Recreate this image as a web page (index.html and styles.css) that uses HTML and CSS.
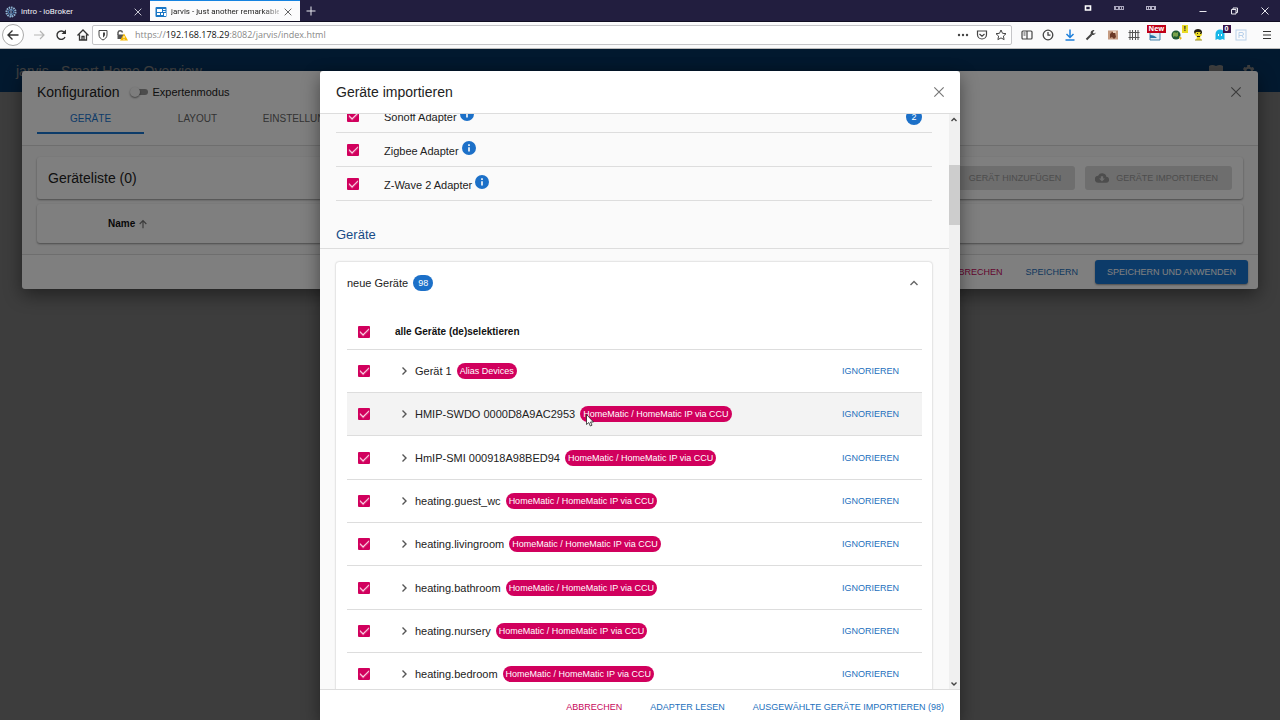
FILE: index.html
```html
<!DOCTYPE html>
<html lang="de">
<head>
<meta charset="utf-8">
<meta name="viewport" content="width=device-width, initial-scale=1">
<title>jarvis - just another remarkable vis</title>
<link rel="stylesheet" href="styles.css">
</head>
<body>
<svg class="defs" aria-hidden="true">
  <symbol id="close" viewBox="0 0 12 12"><path d="M2 2l8 8M10 2l-8 8" fill="none" stroke="currentColor"/></symbol>
  <symbol id="chevron" viewBox="0 0 12 12"><path d="M4.500 2.500L8 6l-3.500 3.500" fill="none" stroke="currentColor" stroke-width="1.4"/></symbol>
  <symbol id="info" viewBox="0 0 24 24"><path fill="currentColor" d="M12 0a12 12 0 1 0 0 24a12 12 0 0 0 0-24zm1.4 18h-2.8v-7.500h2.800zm0-9.500h-2.800V5.700h2.800z"/></symbol>
</svg>

<header class="browser">
  <div class="tabstrip">
    <div class="tab">
      <svg class="fav" viewBox="0 0 12 12" fill="none" stroke="#8fb4d2"><circle cx="6" cy="6" r="4.500" stroke-width="2" stroke-dasharray="1.500 .8"/><circle cx="6" cy="6" r="2.500" stroke="#4b86b8"/><path d="M6 3v8"/></svg>
      <span class="tab-title">intro - ioBroker</span>
      <button class="plain" aria-label="Tab schließen"><svg class="i10" ><use href="#close"/></svg></button>
    </div>
    <div class="tab active">
      <svg class="fav" viewBox="0 0 12 12"><rect x=".5" y="1" width="11" height="10" rx="1" fill="#1976c5"/><path d="M2 3h5v3H2zM8 3h2.500v1H8zM8 5h2.500v1H8zM2 7h3v2H2zM6 7h2v2H6zM9 7h2v3H9z" fill="#fff"/></svg>
      <span class="tab-title fade">jarvis - just another remarkable</span>
      <button class="plain" aria-label="Tab schließen"><svg class="i10"><use href="#close"/></svg></button>
    </div>
    <button class="plain new-tab" aria-label="Neuer Tab"><svg class="i10" viewBox="0 0 10 10"><path d="M5 .5v9M.5 5h9" stroke="currentColor"/></svg></button>
    <div class="window-icons">
      <svg class="i8" viewBox="0 0 8 8"><path d="M1.500 2h5v4h-5z" fill="none" stroke="#fff" stroke-width="1.600"/></svg>
      <svg class="i10" viewBox="0 0 10 8"><path d="M0 2h10v4H0z" fill="#a9a6bd"/><path d="M2 3h2v2H2zM6 3h1v2H6zM8 3h1v2H8z" fill="#282340"/></svg>
      <svg class="i10" viewBox="0 0 10 8"><path d="M0 2h10v4H0z" fill="#b5b2c8"/><path d="M1 3h1v2H1zM3 3h1v2H3zM6 3h2v2H6z" fill="#282340"/></svg>
    </div>
    <div class="window-controls">
      <button class="plain" aria-label="Minimieren"><svg class="i10" viewBox="0 0 10 10"><path d="M1.500 5.500h7" stroke="currentColor"/></svg></button>
      <button class="plain" aria-label="Wiederherstellen"><svg class="i10" viewBox="0 0 10 10" fill="none" stroke="currentColor"><path d="M2.500 3.500h4.500v4.500H2.500zM4 3.500v-1.500h4.500v4.500H7"/></svg></button>
      <button class="plain" aria-label="Schließen"><svg class="i10" viewBox="0 0 10 10"><path d="M1.500 1.500l7 7M8.500 1.500l-7 7" stroke="currentColor"/></svg></button>
    </div>
  </div>
  <div class="toolbar">
    <nav class="nav">
      <button class="plain back" aria-label="Zurück"><svg class="i14" viewBox="0 0 14 14" fill="none" stroke="#333" stroke-width="1.400"><path d="M12.500 7H2.500M6.500 2.500L2 7l4.500 4.500"/></svg></button>
      <button class="plain" aria-label="Vor"><svg class="i14" viewBox="0 0 14 14" fill="none" stroke="#b5b5b5" stroke-width="1.200"><path d="M2 7h10M8 3l4 4-4 4"/></svg></button>
      <button class="plain" aria-label="Neu laden"><svg class="i14" viewBox="0 0 14 14" fill="none" stroke="#333" stroke-width="1.400"><path d="M11 9A4.200 4.200 0 1 1 10.500 4.500"/><path d="M12 1.500V6H7.500z" fill="#333" stroke="none"/></svg></button>
      <button class="plain" aria-label="Startseite"><svg class="i14" viewBox="0 0 14 14" fill="none" stroke="#333" stroke-width="1.300"><path d="M1.500 7.500L7 2l5.500 5.500M3.500 6.500V12h7V6.500M6 12V8.500h2V12"/></svg></button>
    </nav>
    <div class="urlbar">
      <svg class="i12" viewBox="0 0 12 12" fill="none" stroke="#444"><path d="M2 1.500h8v4.500c0 2.500-2 4-4 5-2-1-4-2.500-4-5z"/><path d="M6 3.500v5c1-.6 2-1.500 2-3v-2z" fill="#444" stroke="none"/></svg>
      <svg class="i12" viewBox="0 0 12 12"><path d="M2 6V3.500a2.300 2.300 0 0 1 4.500 0" fill="none" stroke="#555" stroke-width="1.400"/><path d="M1.500 5.500h6V10h-6z" fill="#555"/><path d="M8 4.500l4 7H4z" fill="#f5b800"/><path d="M8 7v2.200M8 10v.8" stroke="#fff"/></svg>
      <p class="url">https://<b>192.168.178.29</b>:8082/jarvis/index.html</p>
      <svg class="i12" viewBox="0 0 12 12" fill="#444"><circle cx="2" cy="6" r="1.200"/><circle cx="6" cy="6" r="1.200"/><circle cx="10" cy="6" r="1.200"/></svg>
      <svg class="i12" viewBox="0 0 12 12" fill="none" stroke="#444" stroke-width="1.200"><path d="M1.500 2h9v3.500a4.500 4.500 0 0 1-9 0zM3.500 5L6 7.300 8.500 5"/></svg>
      <svg class="i12" viewBox="0 0 12 12" fill="none" stroke="#444"><path d="M6 1l1.500 3.300 3.500.4-2.600 2.400.7 3.500L6 8.900l-3.100 1.700.7-3.500L1 4.700l3.500-.4z"/></svg>
    </div>
    <div class="extensions">
      <svg class="i14" viewBox="0 0 14 14" fill="none" stroke="#444" stroke-width="1.200"><rect x="2" y="3" width="10" height="8" rx="1"/><path d="M7 3v8M3.500 5h2M3.500 7h2"/></svg>
      <svg class="i14" viewBox="0 0 14 14" fill="none" stroke="#444" stroke-width="1.300"><circle cx="7" cy="7" r="4.800"/><path d="M7 4v3.200h2.500"/></svg>
      <svg class="i14" viewBox="0 0 14 14" fill="none" stroke="#1e7fdb" stroke-width="1.500"><path d="M7 1.500v8M3.500 6L7 9.500 10.500 6M2.500 12h9"/></svg>
      <svg class="i14" viewBox="0 0 14 14"><path d="M2.500 11.500l5-5" stroke="#444" stroke-width="2"/><path d="M9.500 2a3 3 0 0 0-2.500 4.500 3 3 0 0 0 4.700-2L10 5.700 8.800 4.500 10.500 2z" fill="#444"/></svg>
      <svg class="i14" viewBox="0 0 14 14"><path d="M2 2.500h10v9H2z" fill="#c59b82"/><path d="M4 6l2-2 3 1 1 4-2 2-2-2-2 1z" fill="#6c3927"/><path d="M7 3h3v2H7z" fill="#ead1bd"/></svg>
      <svg class="i14" viewBox="0 0 14 14" fill="none" stroke="#555"><path d="M3 2v10M5.500 2v10M8.500 2v10M11 2v10M1.500 4.500h11M1.500 9.500h11"/></svg>
      <span class="ext"><svg class="i14" viewBox="0 0 14 14"><path d="M2 3h10v9H2z" fill="#dcebf3" stroke="#4783ad"/><path d="M2 7c3 0 5 1 7 3H2z" fill="#2672a3"/></svg><span class="ext-badge new">New</span></span>
      <span class="ext"><svg class="i14" viewBox="0 0 14 14"><circle cx="6" cy="7" r="4.500" fill="#205a32"/><path d="M3 5c2-2 3 1 5-1v4c-2 2-3-1-5 1z" fill="#79a24b"/><path d="M9 8l3 2-2 2z" fill="#e9b512"/></svg><span class="ext-badge warn">!</span></span>
      <svg class="i14" viewBox="0 0 14 14"><path d="M3 4l3-2 4 1 1 4-2 2 1 3H5l1-3-2-2z" fill="#e8d722"/><path d="M3 4c0-4 8-4 8 0v2L9 4H5L4 6zM6 5h1v1H6zM9 5h1v1H9zM6 8h3v1H6z" fill="#262219"/><path d="M4 12h7" stroke="#9a8d20"/></svg>
      <span class="ext"><svg class="i14" viewBox="0 0 14 14"><path d="M2.500 12V6a4.500 4.500 0 0 1 9 0v6l-2-1-2.500 1-2.500-1z" fill="#18b7e8"/><path d="M5 6h1v2H5zM8 6h1v2H8z" fill="#fff"/></svg><span class="ext-badge zero">0</span></span>
      <svg class="i14" viewBox="0 0 14 14" fill="none" stroke="#b8d0ea"><rect x="2" y="2" width="10" height="10"/><path d="M5 10V4.500h3a1.500 1.500 0 0 1 0 3H5M8 7.500L9.500 10"/></svg>
    </div>
    <button class="plain menu" aria-label="Menü"><svg class="i12" viewBox="0 0 12 12" stroke="#333" stroke-width="1.200"><path d="M2 2.500h8M2 6h8M2 9.500h8"/></svg></button>
  </div>
</header>

<div class="page">
  <header class="appbar">
    <p class="app-title">jarvis - Smart Home Overview</p>
    <svg class="i16" viewBox="0 0 16 16" fill="#fff"><path d="M1 3q3-2 7 0 4-2 7 0v8H9l-1 2-1-2H1z"/></svg>
    <svg class="i16" viewBox="0 0 24 24" fill="#fff"><path d="M19.400 13a7.500 7.500 0 0 0 0-2l2.100-1.600-2-3.500-2.500 1a7 7 0 0 0-1.700-1L15 3h-4l-.4 2.900a7 7 0 0 0-1.700 1l-2.500-1-2 3.500L6.500 11a7.500 7.500 0 0 0 0 2l-2.100 1.600 2 3.500 2.500-1a7 7 0 0 0 1.700 1L11 21h4l.3-2.900a7 7 0 0 0 1.700-1l2.500 1 2-3.500zM13 15.500a3.500 3.500 0 1 1 0-7 3.500 3.500 0 0 1 0 7z"/></svg>
  </header>

  <div class="overlay">
    <section class="dialog config" role="dialog" aria-labelledby="config-title">
      <header class="config-head">
        <div class="config-title">
          <h1 id="config-title">Konfiguration</h1>
          <label class="switch"><input type="checkbox" role="switch">Expertenmodus</label>
          <button class="plain push" aria-label="Schließen"><svg class="i14"><use href="#close"/></svg></button>
        </div>
        <nav class="tabs">
          <button class="selected">Geräte</button>
          <button>Layout</button>
          <button>Einstellungen</button>
        </nav>
      </header>
      <div class="config-body">
        <div class="card list-head">
          <h2>Geräteliste (0)</h2>
          <button class="btn disabled push" disabled><svg class="i14" viewBox="0 0 14 14"><path d="M7 2v10M2 7h10" stroke="currentColor" stroke-width="2"/></svg>Gerät hinzufügen</button>
          <button class="btn disabled" disabled><svg class="i14" viewBox="0 0 24 24"><path fill="currentColor" d="M19.400 10A7.500 7.500 0 0 0 5.400 8 6 6 0 0 0 6 20h13a5 5 0 0 0 .4-10zM17 13l-5 5-5-5h3V9h4v4z"/></svg>Geräte importieren</button>
        </div>
        <table class="card device-table"><thead><tr><th>Name <svg class="i10" viewBox="0 0 12 12" fill="none" stroke="#777" stroke-width="1.400"><path d="M6 11V2M2 6l4-4 4 4"/></svg></th></tr></thead></table>
      </div>
      <footer class="actions">
        <button class="btn pink">Abbrechen</button>
        <button class="btn blue">Speichern</button>
        <button class="btn filled">Speichern und anwenden</button>
      </footer>
    </section>
  </div>

  <div class="overlay">
    <section class="dialog import" role="dialog" aria-labelledby="import-title">
      <header class="import-head">
        <h1 id="import-title">Geräte importieren</h1>
        <button class="plain push" aria-label="Schließen"><svg class="i14"><use href="#close"/></svg></button>
      </header>
      <div class="scroller">
        <div class="content">
          <ul class="adapters">
            <li><input type="checkbox" id="a1" checked><label for="a1">Sonoff Adapter</label><svg class="info"><use href="#info"/></svg><span class="count push">2</span></li>
            <li><input type="checkbox" id="a2" checked><label for="a2">Zigbee Adapter</label><svg class="info"><use href="#info"/></svg></li>
            <li><input type="checkbox" id="a3" checked><label for="a3">Z-Wave 2 Adapter</label><svg class="info"><use href="#info"/></svg></li>
          </ul>
          <h2 class="section">Geräte</h2>
          <div class="card panel">
            <button class="panel-head">neue Geräte <span class="count">98</span><svg class="i12 push" viewBox="0 0 12 12"><path d="M2.500 8L6 4.500 9.500 8" fill="none" stroke="#666" stroke-width="1.400"/></svg></button>
            <table class="devices">
              <thead><tr><th><input type="checkbox" id="all" checked></th><th colspan="2"><label for="all">alle Geräte (de)selektieren</label></th></tr></thead>
              <tbody>
                <tr><td><input type="checkbox" id="d1" checked></td><td><div class="device"><svg class="i12"><use href="#chevron"/></svg><label for="d1">Gerät 1</label><span class="chip">Alias Devices</span></div></td><td><button class="btn blue">Ignorieren</button></td></tr>
                <tr class="hover"><td><input type="checkbox" id="d2" checked></td><td><div class="device"><svg class="i12"><use href="#chevron"/></svg><label for="d2">HMIP-SWDO 0000D8A9AC2953</label><span class="chip">HomeMatic / HomeMatic IP via CCU<svg class="cursor" viewBox="0 0 8 13"><path d="M.5.500v10l2.300-2 1.500 3.500 1.700-.8-1.500-3.200h3z" fill="#fff" stroke="#222" stroke-width=".8"/></svg></span></div></td><td><button class="btn blue">Ignorieren</button></td></tr>
                <tr><td><input type="checkbox" id="d3" checked></td><td><div class="device"><svg class="i12"><use href="#chevron"/></svg><label for="d3">HmIP-SMI 000918A98BED94</label><span class="chip">HomeMatic / HomeMatic IP via CCU</span></div></td><td><button class="btn blue">Ignorieren</button></td></tr>
                <tr><td><input type="checkbox" id="d4" checked></td><td><div class="device"><svg class="i12"><use href="#chevron"/></svg><label for="d4">heating.guest_wc</label><span class="chip">HomeMatic / HomeMatic IP via CCU</span></div></td><td><button class="btn blue">Ignorieren</button></td></tr>
                <tr><td><input type="checkbox" id="d5" checked></td><td><div class="device"><svg class="i12"><use href="#chevron"/></svg><label for="d5">heating.livingroom</label><span class="chip">HomeMatic / HomeMatic IP via CCU</span></div></td><td><button class="btn blue">Ignorieren</button></td></tr>
                <tr><td><input type="checkbox" id="d6" checked></td><td><div class="device"><svg class="i12"><use href="#chevron"/></svg><label for="d6">heating.bathroom</label><span class="chip">HomeMatic / HomeMatic IP via CCU</span></div></td><td><button class="btn blue">Ignorieren</button></td></tr>
                <tr><td><input type="checkbox" id="d7" checked></td><td><div class="device"><svg class="i12"><use href="#chevron"/></svg><label for="d7">heating.nursery</label><span class="chip">HomeMatic / HomeMatic IP via CCU</span></div></td><td><button class="btn blue">Ignorieren</button></td></tr>
                <tr><td><input type="checkbox" id="d8" checked></td><td><div class="device"><svg class="i12"><use href="#chevron"/></svg><label for="d8">heating.bedroom</label><span class="chip">HomeMatic / HomeMatic IP via CCU</span></div></td><td><button class="btn blue">Ignorieren</button></td></tr>
              </tbody>
            </table>
          </div>
        </div>
        <div class="scrollbar" aria-hidden="true">
          <svg class="arrow" viewBox="0 0 10 10"><path d="M2.500 6.500L5 4l2.500 2.500" fill="none" stroke="#444" stroke-width="1.400"/></svg>
          <div class="thumb"></div>
          <svg class="arrow push-down" viewBox="0 0 10 10"><path d="M2.500 4L5 6.500 7.500 4" fill="none" stroke="#444" stroke-width="1.400"/></svg>
        </div>
      </div>
      <footer class="actions">
        <button class="btn pink">Abbrechen</button>
        <button class="btn blue">Adapter lesen</button>
        <button class="btn blue">Ausgewählte Geräte importieren (98)</button>
      </footer>
    </section>
  </div>
</div>
</body>
</html>
```
FILE: styles.css
```css
* { box-sizing: border-box; }
body {
  margin: 0;
  height: 100vh;
  display: flex;
  flex-direction: column;
  overflow: hidden;
  font: 11px/16px "Liberation Sans", Arial, sans-serif;
  color: #222;
}
h1, h2, p, ul { margin: 0; padding: 0; font-weight: 400; }
h1, h2 { font-size: 14px; line-height: 20px; }
button { font: inherit; color: inherit; border: 0; background: none; padding: 0; }
svg { flex: none; display: block; }
.defs { display: none; }
.plain { display: flex; align-items: center; justify-content: center; color: #777; }
.push { margin-left: auto; }
.i8 { width: 8px; height: 8px; }
.i10 { width: 10px; height: 10px; }
.i12 { width: 12px; height: 12px; }
.i14 { width: 14px; height: 14px; }
.i16 { width: 16px; height: 16px; }

/* Browser window */
.browser { font-family: "Open Sans", "Noto Sans", sans-serif; font-size: 9px; }
.tabstrip { display: flex; height: 22px; background: #221e3f; color: #f3f3f8; border-bottom: 1px solid #100d22; }
.tab { width: 150px; display: flex; align-items: center; gap: 4px; padding: 2px 7px 0 5px; }
.tab.active { background: #fbfbfc; color: #222; border-top: 1px solid #1683e0; padding-top: 1px; }
.tab-title { flex: 1; overflow: hidden; white-space: nowrap; font-family: Roboto, sans-serif; font-size: 8px; }
.fade { mask-image: linear-gradient(to right, #000 85%, rgba(0, 0, 0, .3)); }
.fav { width: 12px; height: 12px; }
.new-tab { width: 22px; }
.window-icons { display: flex; gap: 22px; margin-left: auto; padding-top: 4px; align-items: flex-start; }
.window-icons svg { height: 8px; }
.window-controls { display: flex; gap: 21px; margin: 0 10px 0 42px; }
.tabstrip .plain { color: #e8e8ef; }
.tab.active .plain { color: #444; }
.toolbar { display: flex; align-items: center; height: 27px; background: #fafafb; border-bottom: 1px solid #bbb; }
.nav { display: flex; gap: 8px; width: 92px; padding-left: 2px; align-items: center; }
.back { width: 22px; height: 22px; border: 1px solid #aaa; border-radius: 50%; background: #fff; }
.nav .plain + .plain { width: 14px; }
.urlbar { flex: 1; display: flex; align-items: center; gap: 7px; height: 20px; padding: 0 4px; border: 1px solid #c5c5c8; background: #fff; border-radius: 2px; }
.url { flex: 1; color: #888; }
.url b { font-weight: 400; color: #111; }
.extensions { display: flex; justify-content: space-between; width: 228px; margin-left: 8px; }
.ext { position: relative; }
.ext-badge { position: absolute; top: -3px; right: -4px; font: 700 7px/8px "Open Sans", sans-serif; padding: 0 2px; color: #fff; }
.new { background: #c00018; }
.warn { background: #eadb25; color: #222; }
.zero { background: #3b164b; }
.menu { width: 26px; margin-left: 6px; }

/* Application */
.page { flex: 1; min-height: 0; position: relative; background: #f4f4f4; overflow: hidden; }
.appbar { display: flex; align-items: center; gap: 16px; height: 43px; padding: 0 24px 0 16px; background: #0b65bd; color: #fff; }
.app-title { flex: 1; font-size: 14px; }
.overlay { position: absolute; inset: 0; padding: 22px 22px 0; background: rgba(0, 0, 0, .5); display: flex; flex-direction: column; align-items: center; }
.dialog { display: flex; flex-direction: column; background: #fff; border-radius: 3px; box-shadow: 0 6px 18px rgba(0, 0, 0, .45); }
.card { background: #fff; border-radius: 3px; box-shadow: 0 1px 2px rgba(0, 0, 0, .4); }

.config { width: 100%; }
.config-head { padding: 11px 15px; border-bottom: 1px solid #ddd; }
.config-title { display: flex; align-items: center; height: 20px; }
.switch { display: flex; align-items: center; gap: 5px; margin-left: 10px; }
.switch input { appearance: none; width: 18px; height: 6px; margin: 0; border-radius: 3px; background: linear-gradient(#999, #999) 8px 0 no-repeat; display: flex; align-items: center; }
.switch input::before { content: ""; width: 10px; height: 10px; flex: none; border-radius: 50%; background: #fafafa; box-shadow: 0 1px 2px rgba(0, 0, 0, .5); }
.tabs { display: flex; height: 32px; }
.tabs button { width: 107px; padding-top: 4px; font-size: 10px; text-transform: uppercase; color: #666; border-bottom: 2px solid transparent; }
.tabs .selected { color: #1976d2; border-color: #1976d2; }
.config-body { display: flex; flex-direction: column; gap: 5px; padding: 11px 15px; background: #fafafa; border-bottom: 1px solid #ddd; }
.list-head { display: flex; align-items: center; gap: 10px; padding: 9px 11px; }
.device-table { height: 39px; width: 100%; border-spacing: 0; }
.device-table th { padding: 0 0 0 71px; font-size: 10px; text-align: left; color: #111; }
.device-table svg { display: inline-block; vertical-align: middle; }

.btn { display: flex; align-items: center; gap: 7px; height: 24px; padding: 0 6px; border-radius: 3px; font-size: 9px; text-transform: uppercase; white-space: nowrap; }
.pink { color: #c7085c; }
.blue { color: #1c70bd; }
.filled { color: #fff; background: #1976d2; padding: 0 12px; box-shadow: 0 1px 2px rgba(0, 0, 0, .4); }
.disabled { padding: 0 14px 0 10px; color: #9a9a9a; background: #dcdcdc; }
.actions { display: flex; justify-content: flex-end; align-items: center; gap: 11px; padding: 5px 10px; }

/* Import dialog */
.import { width: 50vw; flex: 1; min-height: 0; border-radius: 3px 3px 0 0; }
.import-head { display: flex; align-items: center; height: 43px; padding: 0 14px 0 16px; border-bottom: 1px solid #ddd; }
.scroller { flex: 1; min-height: 0; display: flex; background: #fafafa; }
.content { flex: 1; overflow: hidden; }
.import .actions { gap: 16px; padding-bottom: 1px; border-top: 1px solid #ddd; }
.adapters { list-style: none; margin: -15px 17px 0 16px; }
.adapters li { display: flex; align-items: center; height: 34px; border-bottom: 1px solid #ddd; padding: 0 10px 0 11px; }
.adapters label { margin: 2px 3px 0 25px; }
.info { width: 14px; height: 14px; margin-bottom: 3px; color: #1c70c8; }
.count { min-width: 16px; height: 16px; padding: 0 5px; border-radius: 8px; background: #1c70c8; color: #fff; font-size: 9px; text-align: center; }
.adapters .count { margin-top: 3px; }
.section { height: 48px; padding: 18px 16px 0; font-size: 13px; line-height: 32px; color: #174b86; border-bottom: 1px solid #ddd; }
.panel { margin: 13px 17px 0 16px; padding: 0 10px 0 11px; box-shadow: 0 0 2px rgba(0, 0, 0, .3); }
.panel-head { display: flex; align-items: center; gap: 5px; width: 100%; height: 42px; padding-right: 2px; }
.devices { width: 100%; border-spacing: 0; }
.devices th, .devices td { height: 43px; padding: 0; text-align: left; border-bottom: 1px solid #ddd; }
.devices th { height: 46px; padding-top: 10px; font-size: 10px; color: #111; }
.devices tr:nth-child(3n) td { height: 44px; }
.devices tr > :first-child { width: 48px; padding-left: 11px; }
.devices td:last-child { width: 86px; }
.hover { background: #f3f3f3; }
.device { display: flex; align-items: center; gap: 5px; }
.device > .i12 { color: #555; margin-left: 3px; }
.chip { position: relative; height: 16px; padding: 0 3px; border-radius: 8px; background: #d1005d; color: #fff; font-size: 9px; white-space: nowrap; }
.cursor { position: absolute; left: 6px; top: 8px; width: 8px; height: 13px; }
.import input { appearance: none; display: grid; place-items: center; width: 12px; height: 12px; margin: 0; border-radius: 1px; background: linear-gradient(#d1005d, #d1005d); }
.import input::before { content: ""; width: 8px; height: 4px; margin-bottom: 3px; border: solid #ffe3ef; border-width: 0 0 1px 1px; box-shadow: -1px 1px 0 rgba(255, 255, 255, .25); transform: rotate(-45deg); }
.scrollbar { width: 11px; display: flex; flex-direction: column; background: #f0f0f0; }
.arrow { width: 10px; height: 11px; }
.thumb { height: 60px; margin-top: 40px; background: #cdcdcd; }
.push-down { margin-top: auto; }
```
